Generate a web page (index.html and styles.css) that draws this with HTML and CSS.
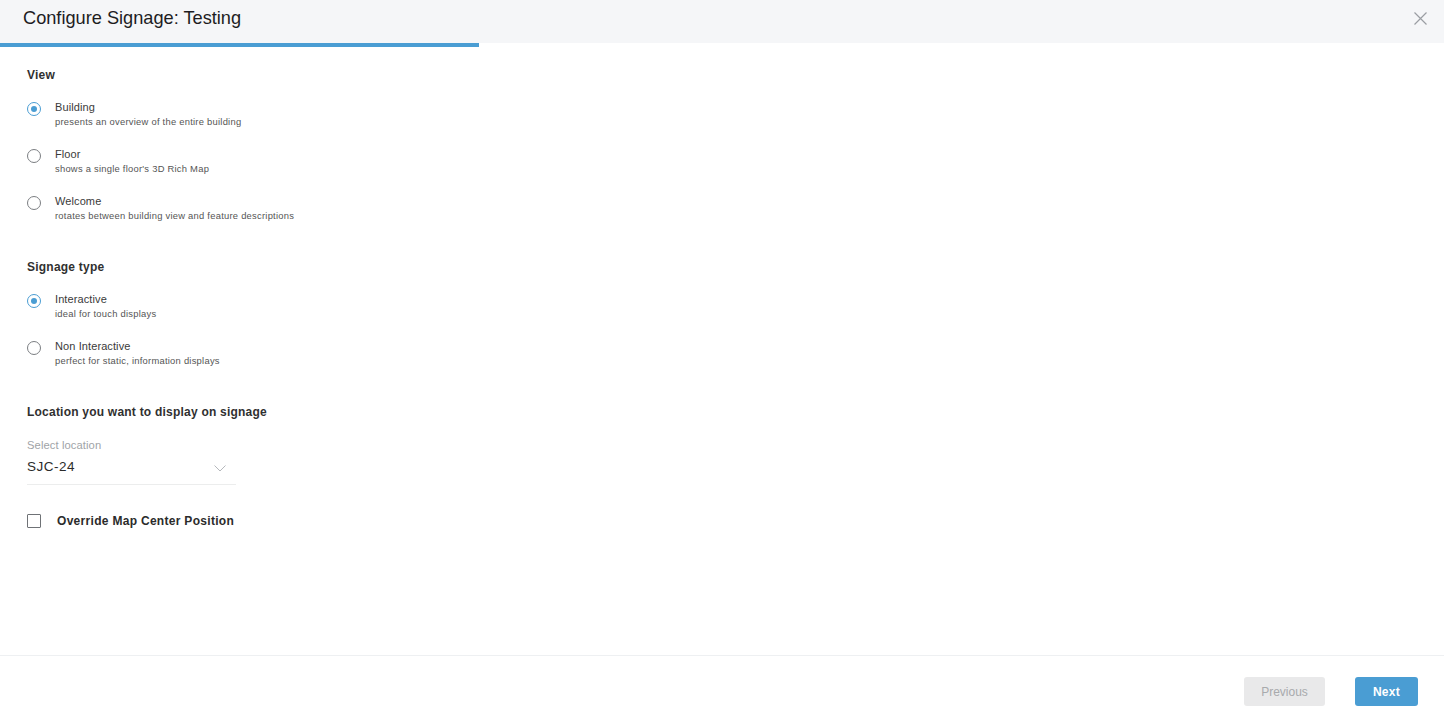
FILE: index.html
```html
<!DOCTYPE html>
<html>
<head>
<meta charset="utf-8">
<link rel="stylesheet" href="styles.css">
</head>
<body>
<div class="modal">
  <header class="header">
    <h1 class="title">Configure Signage: Testing</h1>
    <button class="close" aria-label="Close">
      <svg width="13" height="13" viewBox="0 0 13 13"><path d="M0.5 0.5 L12.5 12.5 M12.5 0.5 L0.5 12.5" stroke="#9a9ea3" stroke-width="1.2" fill="none"/></svg>
    </button>
  </header>
  <div class="progress"><div class="progress-fill"></div></div>

  <main class="content">
    <section class="group">
      <h2 class="group-title">View</h2>
      <div class="options">
        <label class="option">
          <span class="radio checked"></span>
          <span class="text"><span class="label">Building</span><span class="desc">presents an overview of the entire building</span></span>
        </label>
        <label class="option">
          <span class="radio"></span>
          <span class="text"><span class="label">Floor</span><span class="desc">shows a single floor's 3D Rich Map</span></span>
        </label>
        <label class="option">
          <span class="radio"></span>
          <span class="text"><span class="label">Welcome</span><span class="desc">rotates between building view and feature descriptions</span></span>
        </label>
      </div>
    </section>

    <section class="group">
      <h2 class="group-title">Signage type</h2>
      <div class="options">
        <label class="option">
          <span class="radio checked"></span>
          <span class="text"><span class="label">Interactive</span><span class="desc">ideal for touch displays</span></span>
        </label>
        <label class="option">
          <span class="radio"></span>
          <span class="text"><span class="label">Non Interactive</span><span class="desc">perfect for static, information displays</span></span>
        </label>
      </div>
    </section>

    <section class="group">
      <h2 class="group-title">Location you want to display on signage</h2>
      <div class="select">
        <span class="select-label">Select location</span>
        <div class="select-row">
          <span class="select-value">SJC-24</span>
          <svg class="chevron" width="12" height="7" viewBox="0 0 12 7"><path d="M0.5 0.5 L6 6 L11.5 0.5" stroke="#b5b8bc" stroke-width="1" fill="none"/></svg>
        </div>
      </div>
    </section>

    <label class="check">
      <span class="checkbox"></span>
      <span class="check-label">Override Map Center Position</span>
    </label>
  </main>

  <footer class="footer">
    <button class="btn btn-prev">Previous</button>
    <button class="btn btn-next">Next</button>
  </footer>
</div>
</body>
</html>
```
FILE: styles.css
```css
* { box-sizing: border-box; }
html, body { margin: 0; padding: 0; }
body {
  font-family: "Liberation Sans", Arial, sans-serif;
  color: #2b2b2b;
  background: #ffffff;
  width: 1444px;
  height: 718px;
  overflow: hidden;
}
.modal {
  display: flex;
  flex-direction: column;
  height: 718px;
}
.header {
  height: 43px;
  background: #f5f6f8;
  display: flex;
  align-items: center;
  justify-content: space-between;
  padding: 0 17px 0 23px;
}
.title {
  margin: 0;
  font-size: 18.2px;
  font-weight: 400;
  color: #1d1d1f;
  position: relative;
  top: -3px;
}
.close {
  background: none;
  border: 0;
  padding: 0;
  width: 13px;
  height: 13px;
  display: flex;
  position: relative;
  top: -3px;
}
.progress {
  height: 5px;
  background: #ffffff;
}
.progress-fill {
  width: 479px;
  height: 4px;
  background: #4a9dd3;
}
.content {
  flex: 1;
  padding: 20px 27px 0 27px;
  display: flex;
  flex-direction: column;
}
.group-title {
  margin: 0;
  font-size: 12px;
  font-weight: 700;
  color: #303030;
  line-height: 14px;
  letter-spacing: 0.22px;
}
.options {
  display: flex;
  flex-direction: column;
  gap: 20px;
  padding-top: 18px;
  padding-bottom: 39px;
}
.option {
  display: flex;
  align-items: flex-start;
  gap: 14px;
}
.radio {
  width: 14px;
  height: 14px;
  border-radius: 50%;
  border: 1px solid #7b7e82;
  flex: none;
  margin-top: 2px;
  display: flex;
  align-items: center;
  justify-content: center;
}
.radio.checked {
  border-color: #4a9dd3;
}
.radio.checked::after {
  content: "";
  width: 6px;
  height: 6px;
  border-radius: 50%;
  background: #4a9dd3;
}
.text {
  display: flex;
  flex-direction: column;
}
.label {
  font-size: 11px;
  line-height: 14px;
  color: #3a3a3a;
  letter-spacing: 0.1px;
}
.desc {
  font-size: 9.4px;
  line-height: 11px;
  margin-top: 2px;
  color: #555;
  letter-spacing: 0.25px;
}
.select {
  width: 209px;
  margin-top: 20px;
  border-bottom: 1px solid #eceded;
  padding-bottom: 9px;
}
.select-label {
  display: block;
  font-size: 11.2px;
  color: #a0a3a7;
  line-height: 12px;
  letter-spacing: 0.1px;
}
.select-row {
  display: flex;
  align-items: center;
  justify-content: space-between;
  margin-top: 8px;
  padding-right: 10px;
}
.select-value {
  font-size: 13.5px;
  line-height: 16px;
  color: #2b2b2b;
  letter-spacing: 0.5px;
}
.chevron { margin-top: 2px; }
.check {
  display: flex;
  align-items: center;
  gap: 16px;
  margin-top: 29px;
}
.checkbox {
  width: 14px;
  height: 14px;
  border: 1px solid #6f7276;
  border-radius: 1px;
  flex: none;
}
.check-label {
  font-size: 12px;
  font-weight: 700;
  color: #2b2b2b;
  letter-spacing: 0.3px;
}
.footer {
  height: 63px;
  border-top: 1px solid #eef0f2;
  display: flex;
  justify-content: flex-end;
  align-items: flex-start;
  gap: 30px;
  padding: 21px 26px 0 0;
}
.btn {
  height: 29px;
  border: 0;
  border-radius: 3px;
  font-family: "Liberation Sans", Arial, sans-serif;
  font-size: 12px;
  cursor: pointer;
}
.btn-prev {
  width: 81px;
  background: #e9e9ea;
  color: #a8aaad;
}
.btn-next {
  width: 63px;
  background: #4a9dd3;
  color: #ffffff;
  font-weight: 700;
  letter-spacing: 0.3px;
}
```
